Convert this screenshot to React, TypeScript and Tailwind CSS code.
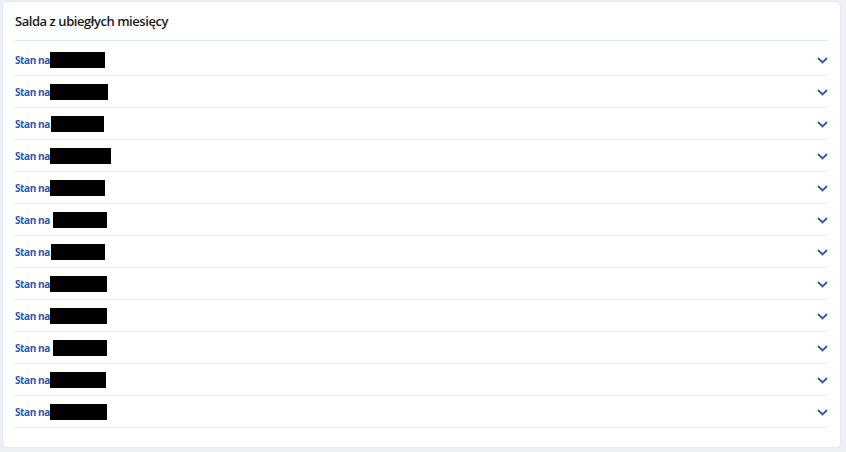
const rows = [
  { gap: 0, w: 55 },
  { gap: 0, w: 58 },
  { gap: 1, w: 53 },
  { gap: 0, w: 61 },
  { gap: 0, w: 55 },
  { gap: 3, w: 54 },
  { gap: 1, w: 54 },
  { gap: 0, w: 57 },
  { gap: 0, w: 57 },
  { gap: 3, w: 54 },
  { gap: 0, w: 56 },
  { gap: 0, w: 57 },
];

function Chevron() {
  return (
    <svg width="11" height="7" viewBox="0 0 11 7" fill="none" className="text-[#1f5bb0]">
      <path d="M1 1 L5.5 5.5 L10 1" stroke="currentColor" strokeWidth="1.8" />
    </svg>
  );
}

export default function App() {
  return (
    <div
      className="w-[846px] h-[452px] bg-[#edf1f6] pt-[2px] pl-[3px] pr-[6px] pb-[6px]"
      style={{ fontFamily: '"Open Sans", "Noto Sans", sans-serif' }}
    >
      <div className="h-[445px] bg-white rounded-[4px] shadow-[0_0_2px_rgba(180,195,215,0.6)] px-[12px]">
        {/* Header */}
        <div className="h-[39px] flex items-center pt-[2px] border-b border-[#dce8f5]">
          <h2 className="text-[13px] font-semibold text-[#1b1b1b] tracking-[-0.45px]">Salda z ubiegłych miesięcy</h2>
        </div>

        {/* Rows */}
        <div className="pt-[3px]">
          {rows.map((r, i) => (
            <div key={i} className="h-[32px] flex items-center justify-between border-b border-[#e6edf5] pt-[1px]">
              <div className="flex items-center">
                <span className="text-[10px] font-bold text-[#1f5bb0] tracking-[-0.4px]">Stan na</span>
                <span className="inline-block h-[16px] bg-black" style={{ width: r.w, marginLeft: r.gap }} />
              </div>
              <Chevron />
            </div>
          ))}
        </div>
      </div>
    </div>
  );
}
